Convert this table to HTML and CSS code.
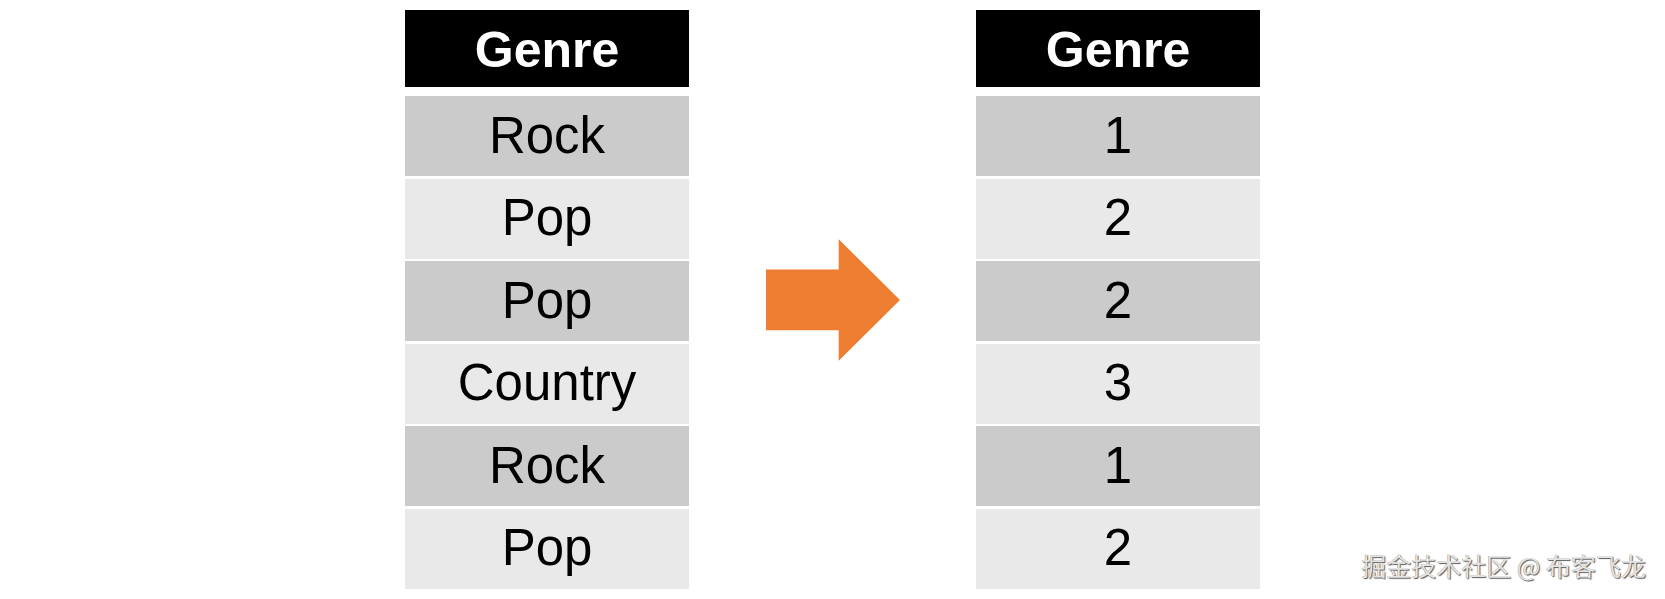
FILE: index.html
```html
<!DOCTYPE html>
<html lang="en">
<head>
<meta charset="utf-8">
<title>Genre encoding</title>
<link rel="stylesheet" href="styles.css">
</head>
<body>
<main class="stage">
  <section class="table">
    <div class="cell head">Genre</div>
    <div class="rows">
      <div class="cell dark">Rock</div>
      <div class="cell light">Pop</div>
      <div class="cell dark">Pop</div>
      <div class="cell light">Country</div>
      <div class="cell dark">Rock</div>
      <div class="cell light">Pop</div>
    </div>
  </section>
  <svg class="arrow" width="134" height="122" viewBox="0 0 134 121.5" aria-hidden="true">
    <polygon points="0,30.3 72.7,30.3 72.7,0 134,60.75 72.7,121.5 72.7,91 0,91" fill="#ED7D31"/>
  </svg>
  <section class="table">
    <div class="cell head">Genre</div>
    <div class="rows">
      <div class="cell dark">1</div>
      <div class="cell light">2</div>
      <div class="cell dark">2</div>
      <div class="cell light">3</div>
      <div class="cell dark">1</div>
      <div class="cell light">2</div>
    </div>
  </section>
</main>
<div class="watermark">掘金技术社区 @ 布客飞龙</div>
</body>
</html>
```

FILE: styles.css
```css
html, body {
  margin: 0;
  padding: 0;
  background: #ffffff;
}

body {
  width: 1665px;
  height: 599px;
  position: relative;
  overflow: hidden;
  font-family: "Liberation Sans", Arial, sans-serif;
}

.stage {
  display: flex;
  justify-content: center;
  align-items: center;
  gap: 76.5px;
  padding-top: 10px;
  height: 579px;
}

.table {
  width: 284px;
  display: flex;
  flex-direction: column;
  gap: 9px;
}

.rows {
  display: flex;
  flex-direction: column;
  gap: 2.6px;
}

.cell {
  display: flex;
  align-items: center;
  justify-content: center;
  box-sizing: border-box;
  height: 80px;
  font-size: 51px;
  color: #000;
  padding-bottom: 2px;
}

.head {
  height: 77px;
  background: #000;
  color: #fff;
  font-weight: bold;
  font-size: 50px;
  padding-bottom: 0;
  padding-top: 3px;
}

.dark {
  background: #cbcbcb;
}

.light {
  background: #e9e9e9;
}

.arrow {
  display: block;
  flex: none;
}

.watermark {
  position: absolute;
  right: 19px;
  top: 550px;
  font-family: "Noto Sans CJK SC", "Noto Sans", sans-serif;
  font-size: 25px;
  line-height: 30px;
  color: #e4e4e4;
  text-shadow: 1px 1px 1px rgba(0, 0, 0, 0.65), -0.5px -0.5px 0.5px rgba(0, 0, 0, 0.35);
  white-space: nowrap;
}
```
